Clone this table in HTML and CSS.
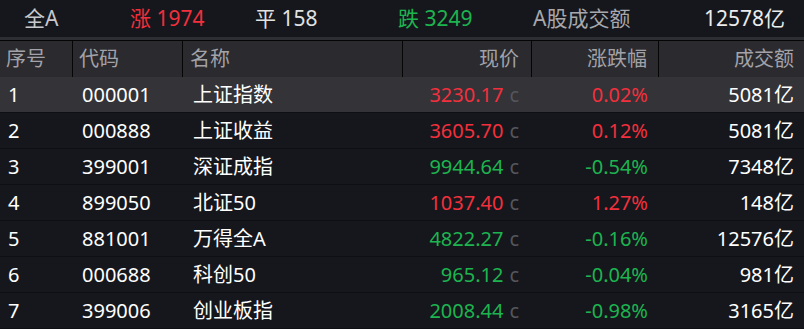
FILE: index.html
```
<!DOCTYPE html>
<html lang="zh-CN">
<head>
<meta charset="utf-8">
<link rel="stylesheet" href="styles.css">
</head>
<body>
<div class="panel">
  <div class="topbar">
    <span class="t-all">全A</span>
    <span class="up">涨 1974</span>
    <span class="flat">平 158</span>
    <span class="down">跌 3249</span>
    <span class="t-label">A股成交额</span>
    <span class="t-total">12578亿</span>
  </div>
  <div class="divider"></div>
  <div class="table">
    <div class="row head">
      <div class="c c-no">序号</div>
      <div class="c c-code">代码</div>
      <div class="c c-name">名称</div>
      <div class="c c-price">现价</div>
      <div class="c c-pct">涨跌幅</div>
      <div class="c c-amt">成交额</div>
    </div>
    <div class="row sel">
      <div class="c c-no">1</div><div class="c c-code">000001</div><div class="c c-name">上证指数</div>
      <div class="c c-price up">3230.17<span class="cc">c</span></div><div class="c c-pct up">0.02%</div><div class="c c-amt">5081亿</div>
    </div>
    <div class="row">
      <div class="c c-no">2</div><div class="c c-code">000888</div><div class="c c-name">上证收益</div>
      <div class="c c-price up">3605.70<span class="cc">c</span></div><div class="c c-pct up">0.12%</div><div class="c c-amt">5081亿</div>
    </div>
    <div class="row">
      <div class="c c-no">3</div><div class="c c-code">399001</div><div class="c c-name">深证成指</div>
      <div class="c c-price down">9944.64<span class="cc">c</span></div><div class="c c-pct down">-0.54%</div><div class="c c-amt">7348亿</div>
    </div>
    <div class="row">
      <div class="c c-no">4</div><div class="c c-code">899050</div><div class="c c-name">北证50</div>
      <div class="c c-price up">1037.40<span class="cc">c</span></div><div class="c c-pct up">1.27%</div><div class="c c-amt">148亿</div>
    </div>
    <div class="row">
      <div class="c c-no">5</div><div class="c c-code">881001</div><div class="c c-name">万得全A</div>
      <div class="c c-price down">4822.27<span class="cc">c</span></div><div class="c c-pct down">-0.16%</div><div class="c c-amt">12576亿</div>
    </div>
    <div class="row">
      <div class="c c-no">6</div><div class="c c-code">000688</div><div class="c c-name">科创50</div>
      <div class="c c-price down">965.12<span class="cc">c</span></div><div class="c c-pct down">-0.04%</div><div class="c c-amt">981亿</div>
    </div>
    <div class="row">
      <div class="c c-no">7</div><div class="c c-code">399006</div><div class="c c-name">创业板指</div>
      <div class="c c-price down">2008.44<span class="cc">c</span></div><div class="c c-pct down">-0.98%</div><div class="c c-amt">3165亿</div>
    </div>
  </div>
</div>
</body>
</html>
```
FILE: styles.css
```
html, body {
  margin: 0;
  padding: 0;
  background: #15171c;
}
body {
  font-family: "Noto Sans", "Noto Sans CJK SC", sans-serif;
  color: #ffffff;
  width: 804px;
  height: 329px;
  overflow: hidden;
}
.topbar {
  height: 37px;
  display: grid;
  grid-template-columns: 106px 125px 143px 135px 1fr auto;
  align-items: center;
  padding: 0 19px 0 24px;
  font-size: 21px;
  line-height: 37px;
  background: #15171c;
}
.t-all { color: #c8c8cc; }
.flat { color: #e2e2e2; }
.t-label { color: #a8a8ac; }
.t-total { color: #ececec; }
.up { color: #f2303d; }
.down { color: #1db450; }
.divider {
  height: 3px;
  background: #2d2e33;
  border-bottom: 1px solid #050506;
}
.row {
  display: grid;
  grid-template-columns: 73px 110px 220px 129px 127px 1fr;
  height: 35px;
  border-bottom: 1px solid #0e1014;
  font-size: 20px;
  line-height: 35px;
  white-space: nowrap;
}
.row.head {
  height: 36px;
  line-height: 36px;
  background: #2a2a2f;
  color: #a2a2a8;
  border-bottom: none;
}
.row.head .c {
  border-right: 1px solid #050506;
}
.row.head .c-amt { border-right: none; }
.row.sel { background: #333338; }
.c { overflow: hidden; }
.c-no { padding-left: 8px; }
.c-code { padding-left: 9px; }
.c-name { padding-left: 10px; }
.head .c-no { padding-left: 6px; }
.head .c-code { padding-left: 6px; }
.head .c-name { padding-left: 7px; }
.c-price { text-align: right; padding-right: 13px; }
.head .c-price { padding-right: 12px; }
.c-pct { text-align: right; padding-right: 11px; }
.c-amt { text-align: right; padding-right: 10px; }
.cc {
  color: #55565b;
  margin-left: 6px;
}
```
